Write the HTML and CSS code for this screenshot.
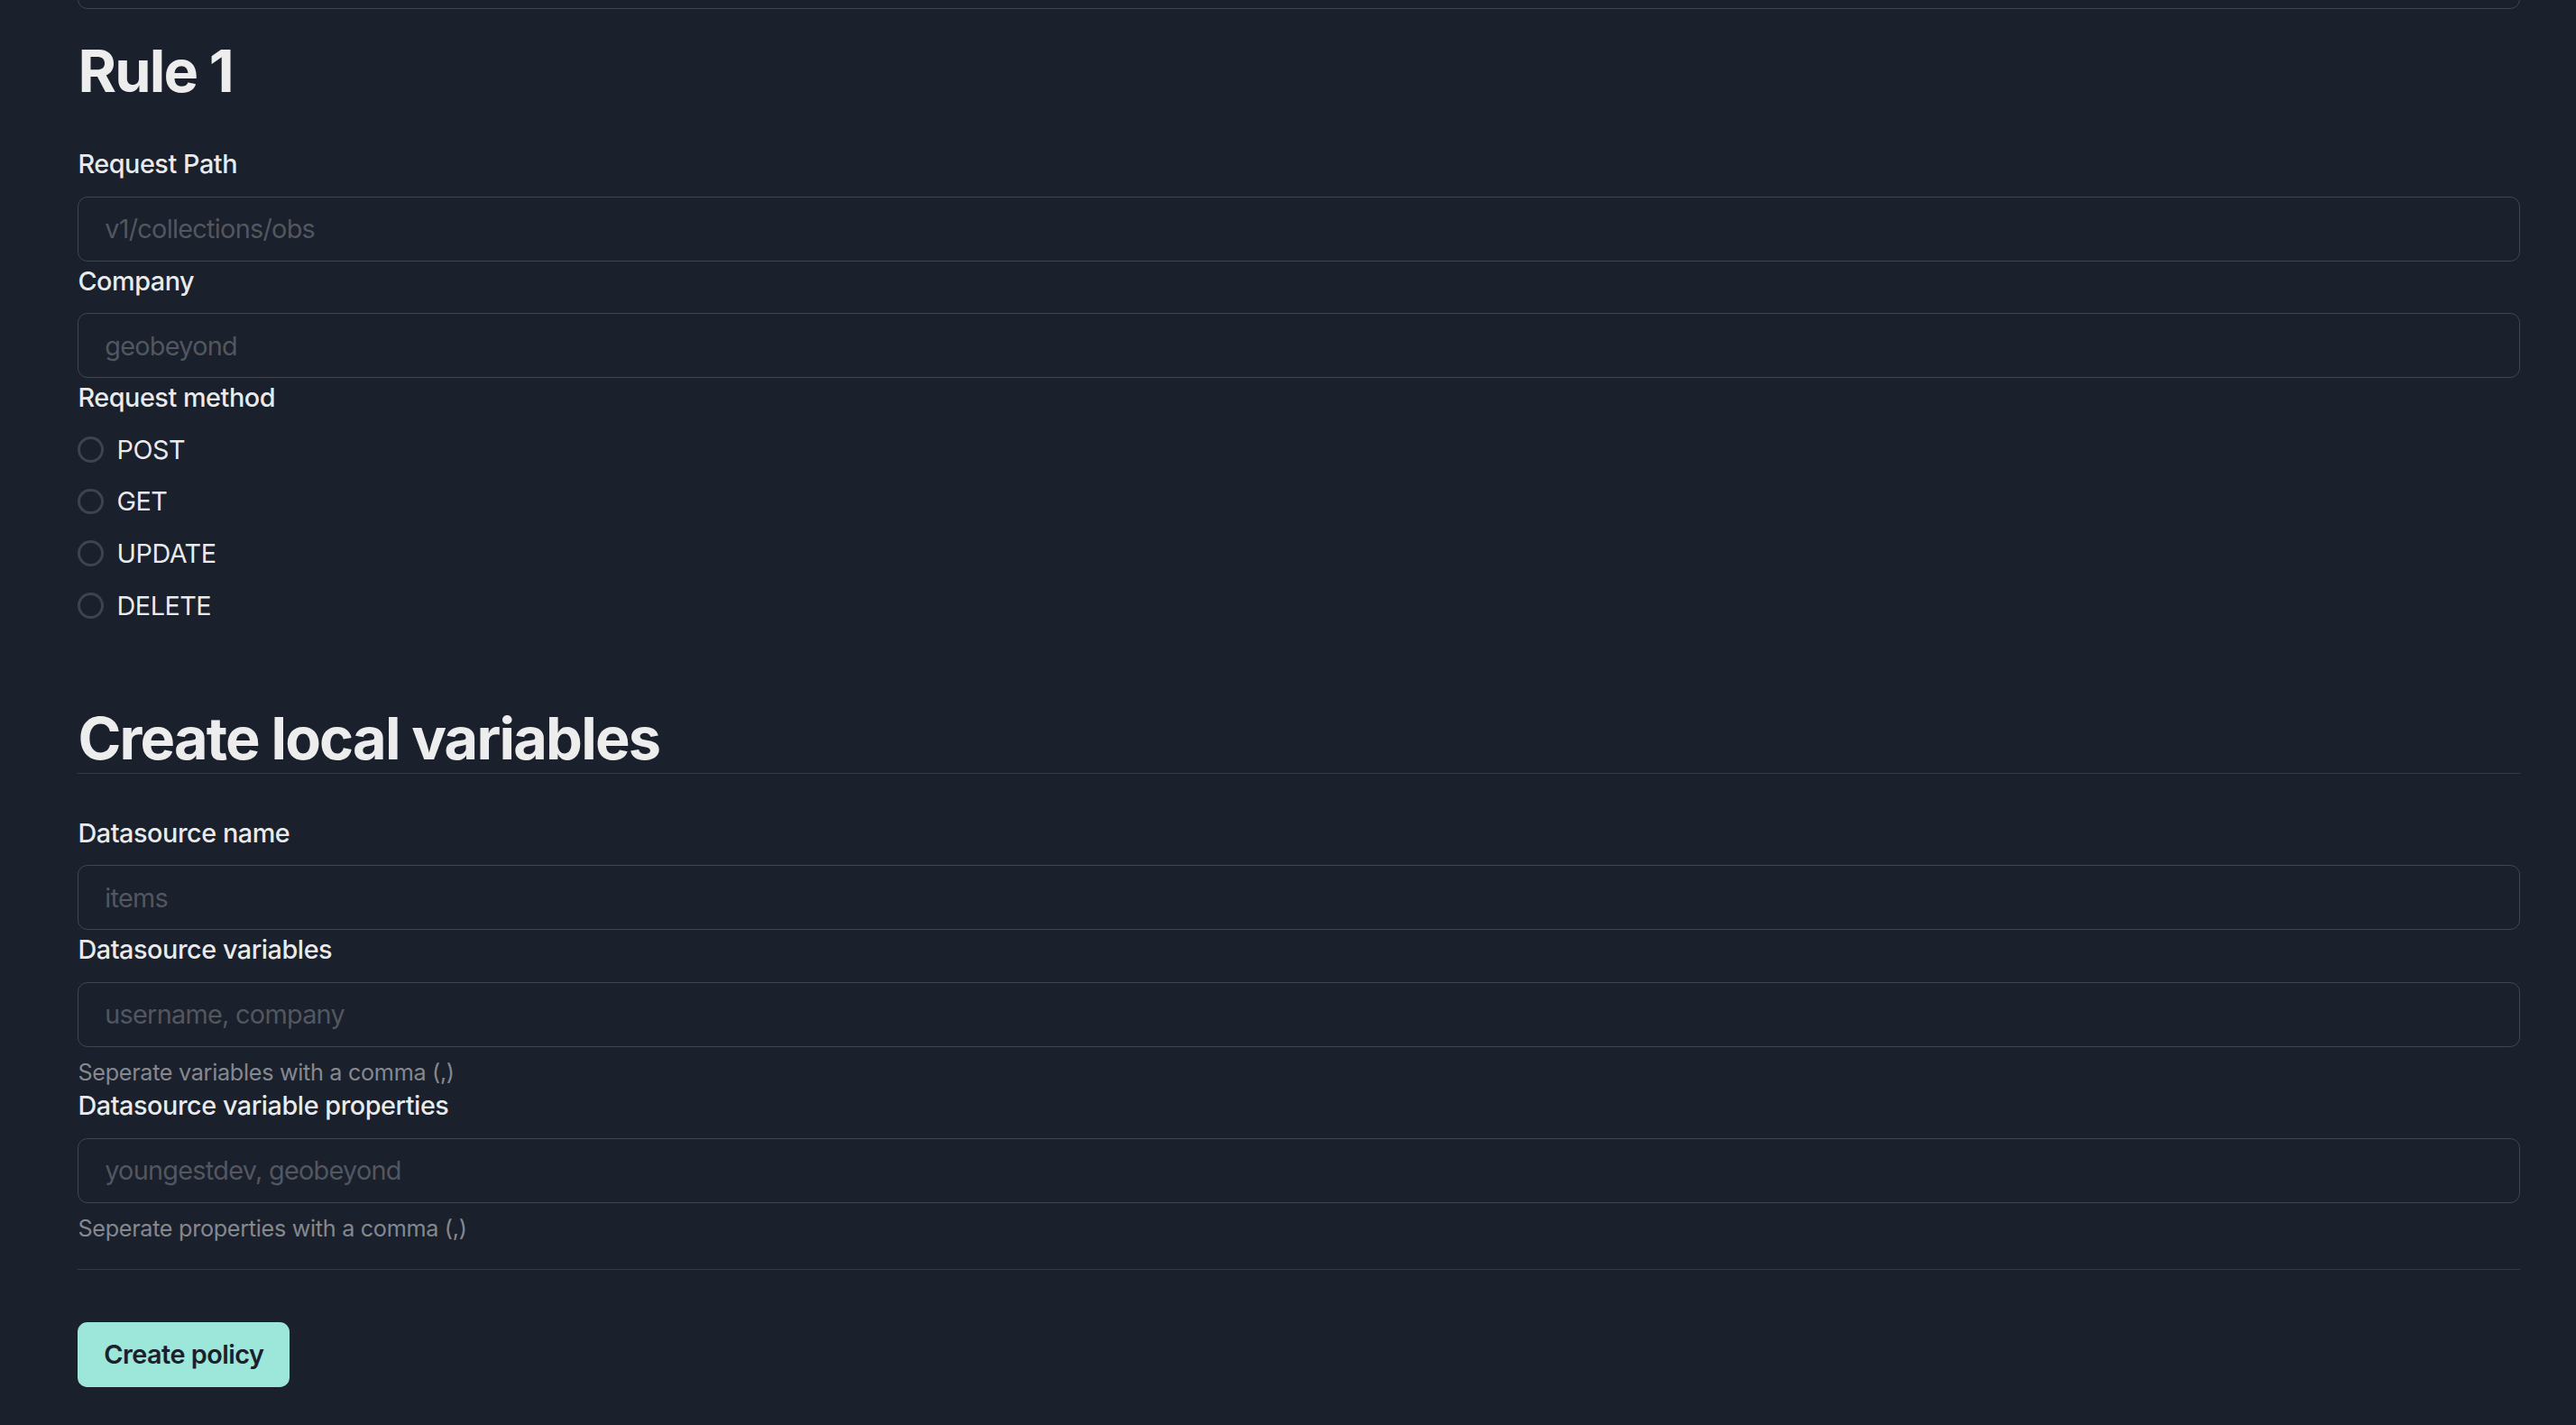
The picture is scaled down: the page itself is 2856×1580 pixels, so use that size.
FILE: index.html
```html
<!DOCTYPE html>
<html lang="en">
<head>
<meta charset="utf-8">
<title>Create policy</title>
<link rel="stylesheet" href="styles.css">
</head>
<body>
<main class="page">
  <div class="field-tail">
    <input class="input" type="text" placeholder="">
  </div>

  <h2 class="heading heading-rule">Rule 1</h2>

  <div class="form-control">
    <label class="form-label">Request Path</label>
    <input class="input" type="text" placeholder="v1/collections/obs">
  </div>

  <div class="form-control">
    <label class="form-label">Company</label>
    <input class="input" type="text" placeholder="geobeyond">
  </div>

  <div class="form-control">
    <label class="form-label">Request method</label>
    <div class="radio-group">
      <label class="radio"><span class="radio-control"></span><span class="radio-label">POST</span></label>
      <label class="radio"><span class="radio-control"></span><span class="radio-label">GET</span></label>
      <label class="radio"><span class="radio-control"></span><span class="radio-label">UPDATE</span></label>
      <label class="radio"><span class="radio-control"></span><span class="radio-label">DELETE</span></label>
    </div>
  </div>

  <h2 class="heading heading-section">Create local variables</h2>

  <div class="form-control">
    <label class="form-label">Datasource name</label>
    <input class="input" type="text" placeholder="items">
  </div>

  <div class="form-control">
    <label class="form-label">Datasource variables</label>
    <input class="input" type="text" placeholder="username, company">
    <div class="helper">Seperate variables with a comma (,)</div>
  </div>

  <div class="form-control">
    <label class="form-label">Datasource variable properties</label>
    <input class="input" type="text" placeholder="youngestdev, geobeyond">
    <div class="helper">Seperate properties with a comma (,)</div>
  </div>

  <hr class="divider">

  <div class="actions">
    <button class="button" type="button">Create policy</button>
  </div>
</main>
</body>
</html>
```

FILE: styles.css
```css
html, body {
  margin: 0;
  padding: 0;
  background: #1a202c;
}

body {
  font-family: Inter, "Noto Sans", "Liberation Sans", sans-serif;
  color: rgba(255, 255, 255, 0.92);
  overflow: hidden;
  height: 1580px;
}

.page {
  padding: 0 62px 0 86.4px;
  display: flex;
  flex-direction: column;
}

.field-tail {
  margin-top: -62px;
}

.input {
  display: block;
  box-sizing: border-box;
  width: 100%;
  height: 72px;
  margin: 0;
  padding: 0 28.8px;
  border: 1px solid rgba(255, 255, 255, 0.17);
  border-radius: 10.8px;
  background: transparent;
  color: rgba(255, 255, 255, 0.92);
  font-family: inherit;
  font-size: 28.8px;
  letter-spacing: -0.7px;
  outline: none;
}

.input::placeholder {
  color: rgba(255, 255, 255, 0.25);
  opacity: 1;
}

.heading {
  margin: 0;
  font-size: 64.8px;
  font-weight: 700;
  line-height: 76px;
  letter-spacing: -1.8px;
  color: rgba(255, 255, 255, 0.92);
}

.heading-rule {
  margin-top: 31px;
  margin-bottom: 43px;
}

.heading-section {
  margin-top: 88.7px;
  margin-bottom: 43.3px;
  border-bottom: 1px solid rgba(255, 255, 255, 0.12);
}

.form-control {
  display: flex;
  flex-direction: column;
}

.form-label {
  display: block;
  font-size: 28.8px;
  font-weight: 500;
  line-height: 43.2px;
  letter-spacing: -0.45px;
  margin-bottom: 14.4px;
}

.radio-group {
  display: flex;
  flex-direction: column;
  gap: 14.4px;
}

.radio {
  display: flex;
  align-items: center;
  height: 43.2px;
}

.radio-control {
  box-sizing: border-box;
  width: 28.8px;
  height: 28.8px;
  border-radius: 50%;
  border: 3px solid rgba(255, 255, 255, 0.16);
  flex: none;
}

.radio-label {
  margin-left: 14.4px;
  font-size: 28.8px;
  line-height: 43.2px;
  font-weight: 400;
  letter-spacing: -0.5px;
}

.helper {
  margin-top: 14.4px;
  font-size: 25.2px;
  line-height: 29px;
  letter-spacing: -0.3px;
  color: rgba(255, 255, 255, 0.48);
}

.divider {
  margin: 29.5px 0 0 0;
  border: 0;
  border-top: 1px solid rgba(255, 255, 255, 0.12);
  height: 0;
}

.actions {
  margin-top: 58px;
  display: flex;
}

.button {
  height: 72px;
  padding: 0 28.8px;
  border: 0;
  border-radius: 10.8px;
  background: #9ce6da;
  color: #1a202c;
  font-family: inherit;
  font-size: 28.8px;
  font-weight: 600;
  letter-spacing: -0.5px;
  cursor: pointer;
}
```
